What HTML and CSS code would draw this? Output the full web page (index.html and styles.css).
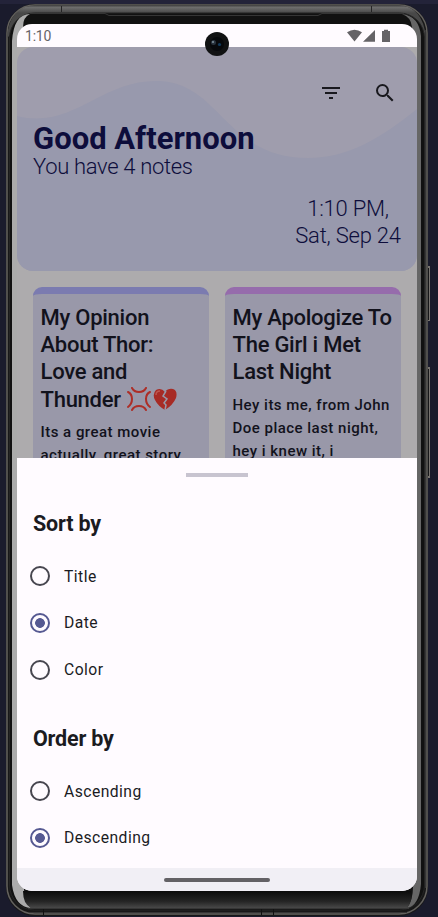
FILE: index.html
```html
<!DOCTYPE html>
<html lang="en">
<head>
<meta charset="utf-8">
<title>Notes</title>
<link rel="stylesheet" href="styles.css">
</head>
<body>
<svg class="device" viewBox="0 0 438 917" aria-hidden="true">
  <defs>
    <linearGradient id="rim" x1="0" y1="5" x2="0" y2="13" gradientUnits="userSpaceOnUse"><stop offset="0" stop-color="#3c3c3c"/><stop offset=".3" stop-color="#6d6d6d"/><stop offset="1" stop-color="#484848"/></linearGradient>
    <linearGradient id="chin" x1="0" y1="891" x2="0" y2="908" gradientUnits="userSpaceOnUse"><stop offset="0" stop-color="#0b0b0b"/><stop offset=".6" stop-color="#242424"/><stop offset="1" stop-color="#484848"/></linearGradient>
  </defs>
  <rect width="438" height="4" fill="#232339"/>
  <path d="M427 266h3v55h-3zM427 367h3v111h-3z" fill="#77736f"/>
  <path d="M427 268h2v52h-2zM427 369h2v107h-2z" fill="#171719"/>
  <rect x="6" y="4" width="422" height="912" rx="29" fill="#181818"/>
  <rect x="7" y="5" width="420" height="909" rx="28" fill="none" stroke="#63615e" stroke-width="1.5"/>
  <path d="M7 38Q9 5 38 5H398Q423 6 426 38L420 32Q416 13 397 13H39Q18 13 12 33Z" fill="url(#rim)"/>
  <rect x="9.500" y="13" width="415" height="897" rx="25" fill="#111" stroke="#252525"/>
  <path d="M61.500 6v6M371.500 6v6" stroke="#252525"/>
  <path d="M12 41Q14 14 30 14Q23 17 23 27L23 38V880L24 889Q24 903 31 908Q15 907 12 885Z" fill="#ababab"/>
  <path d="M402 14Q419 16 421 36V884Q419 906 407 908Q413 900 413 887L413 875V39L412 27Q411 17 402 14Z" fill="#666"/>
  <path d="M26 891H411Q413 901 407 908H31Q23 904 23 891Z" fill="url(#chin)"/>
  <path d="M30 13.500H105L109 15.500H318L322 13.500H404" fill="none" stroke="#353535"/>
  <path d="M28 908.500H409M29 912.500H407" stroke="#363636"/>
  <path d="M43.500 909v6M261.500 909v6M273.500 909v6" stroke="#111"/>
  <path d="M425.500 30V888" stroke="#353535"/>
</svg>
<main class="screen">
  <header class="status">
    <span>1:10</span>
    <svg class="status-icons" viewBox="0 0 44 14" fill="#656367" aria-hidden="true"><path d="M0 3.300Q7.500-1.700 15 3.300L7.500 12.500ZM16 12.800 28 1v11.800ZM35 2h2V.7h4V2h2v11h-8Z"/></svg>
  </header>
  <section class="notes">
    <div class="hero">
      <svg class="waves" viewBox="0 0 400 224" preserveAspectRatio="none" aria-hidden="true"><path d="M0 69C55 83 83 34 139 34C204 34 207 111 291 111C331 111 364 91 400 62V224H0Z" fill="#9899ad"/></svg>
      <nav class="actions">
        <svg viewBox="0 0 24 24" aria-label="Sort"><path d="M3 6h18v2H3zm3 5h12v2H6zm4 5h4v2h-4z"/></svg>
        <svg viewBox="0 0 24 24" aria-label="Search"><path d="M15.500 14h-.79l-.28-.27A6.471 6.471 0 0 0 16 9.500 6.500 6.500 0 1 0 9.500 16c1.610 0 3.090-.59 4.230-1.570l.27.28v.79l5 4.990L20.490 19l-4.990-5zm-6 0C7.010 14 5 11.990 5 9.500S7.010 5 9.500 5 14 7.010 14 9.500 11.990 14 9.500 14z"/></svg>
      </nav>
      <h1>Good Afternoon</h1>
      <p class="count">You have 4 notes</p>
      <p class="clock">1:10 PM,<br>Sat, Sep 24</p>
    </div>
    <div class="grid">
      <article class="card">
        <h2>My Opinion<br>About Thor:<br>Love and<br>Thunder <svg class="emoji" viewBox="0 0 24 24" fill="none" stroke="#ad2e27" stroke-width="2" stroke-linecap="round"><path d="M5 1Q7 5 12 5T19 1M1 5Q5 7 5 12T1 20M23 5Q19 7 19 12T23 20M5 23Q7 19 12 19T19 23"/></svg><svg class="emoji heart" viewBox="0 0 24 24"><path d="M12 5Q8 0 3 3Q-1 7 2 13Q5 19 12 23Q20 18 23 11Q25 4 20 2Q15 1 12 5Z" fill="#a72b25"/><path d="M3 8Q3 4 7 4" fill="none" stroke="#bd5750" stroke-width="1.500"/><path d="M13 4 10 9 14 12 11 16 13 18 12 23" fill="none" stroke="#9899a9" stroke-width="1.500"/></svg></h2>
        <p>Its a great movie<br>actually, great story</p>
      </article>
      <article class="card purple">
        <h2>My Apologize To<br>The Girl i Met<br>Last Night</h2>
        <p>Hey its me, from John<br>Doe place last night,<br>hey i knew it, i</p>
      </article>
    </div>
  </section>
  <section class="sheet">
    <div class="handle"></div>
    <h3>Sort by</h3>
    <div class="options">
      <label><i class="radio"></i>Title</label>
      <label><i class="radio selected"></i>Date</label>
      <label><i class="radio"></i>Color</label>
    </div>
    <h3 class="order">Order by</h3>
    <div class="options">
      <label><i class="radio"></i>Ascending</label>
      <label><i class="radio selected"></i>Descending</label>
    </div>
  </section>
  <footer class="navbar"><div class="pill"></div></footer>
</main>
<svg class="camera" viewBox="0 0 24 24" aria-hidden="true"><circle cx="12" cy="12" r="12" fill="#111213"/><circle cx="12" cy="12" r="7" fill="#07090c"/><circle cx="8.500" cy="10.500" r="2.500" fill="#29333e"/><circle cx="8" cy="10" r="1" fill="#8296a0"/><circle cx="14.500" cy="12.500" r="1.600" fill="#123a5c"/></svg>
</body>
</html>
```

FILE: styles.css
```css
* { box-sizing: border-box; }
body { margin: 0; width: 438px; height: 917px; padding: 24px 21px 26px 17px; overflow: hidden; background: #1a1b2c; font-family: Roboto, sans-serif; color: #1b1b1f; }
h1, h2, h3, p { margin: 0; }
.device { position: absolute; inset: 0; width: 438px; height: 917px; }
.camera { position: absolute; left: 205px; top: 32px; width: 24px; height: 24px; }
.screen { position: relative; width: 400px; height: 867px; display: flex; flex-direction: column; overflow: hidden; border-radius: 15px; background: #fffbff; }
.status { height: 23px; flex: none; padding: 0 26px 0 8px; display: flex; align-items: center; justify-content: space-between; color: #656367; font-size: 14px; line-height: 24px; }
.status span { padding-top: 1px; letter-spacing: -.2px; }
.status-icons { width: 44px; height: 14px; margin-top: 1px; }
.notes { height: 411px; flex: none; overflow: hidden; background: #adabad; }
.hero { height: 224px; position: relative; border-radius: 16px; overflow: hidden; padding: 34px 16px 0; background: #9f9dad; color: #0d0d3b; }
.waves { position: absolute; inset: 0; width: 100%; height: 100%; }
.actions { position: relative; display: flex; justify-content: flex-end; gap: 30px; padding-right: 4px; height: 40px; }
.actions svg { width: 24px; height: 24px; fill: #19191e; }
h1 { position: relative; font-size: 31px; line-height: 35px; font-weight: 700; }
.count { position: relative; font-size: 22px; line-height: 22px; font-weight: 300; letter-spacing: -.32px; }
.clock { position: relative; width: 106px; margin: 17px 0 0 auto; text-align: center; font-size: 22px; line-height: 27px; font-weight: 300; letter-spacing: -.22px; white-space: nowrap; }
.grid { display: grid; grid-template-columns: 176px 176px; gap: 16px; padding: 16px; }
.card { height: 190px; padding: 10px 7.500px; border-top: 7px solid #7b7bb0; border-radius: 9px 9px 0 0; background: #9998a9; color: #12121c; white-space: nowrap; overflow: hidden; }
.card.purple { border-top-color: #966cac; }
h2 { font-size: 22px; line-height: 27.2px; font-weight: 500; letter-spacing: -.25px; }
.card p { margin-top: 8px; font-size: 15px; line-height: 23.3px; font-weight: 500; letter-spacing: .48px; }
.emoji { width: 24px; height: 24px; vertical-align: -4px; margin-left: 1px; }
.heart { margin-left: 2px; }
.sheet { flex: 1; padding: 15px 16px 0; }
.handle { width: 62px; height: 4px; margin: 0 auto; background: #c8c4d0; }
h3 { margin-top: 33px; font-size: 21.5px; line-height: 28px; font-weight: 700; letter-spacing: -.2px; }
.options { padding-top: 14.800px; }
.options label { display: flex; align-items: center; height: 46.700px; gap: 14px; font-size: 15.700px; letter-spacing: .45px; }
.radio { width: 20px; height: 20px; margin-left: -3px; border: 2px solid #47464f; border-radius: 50%; }
.radio.selected { border-color: #565992; background: radial-gradient(circle, #565992 0 4.500px, transparent 5.200px); }
h3.order { margin-top: 32.200px; }
.navbar { height: 23px; flex: none; display: flex; align-items: center; justify-content: center; background: #f1eff5; }
.pill { width: 106px; height: 4px; border-radius: 2px; background: #636165; }
```
